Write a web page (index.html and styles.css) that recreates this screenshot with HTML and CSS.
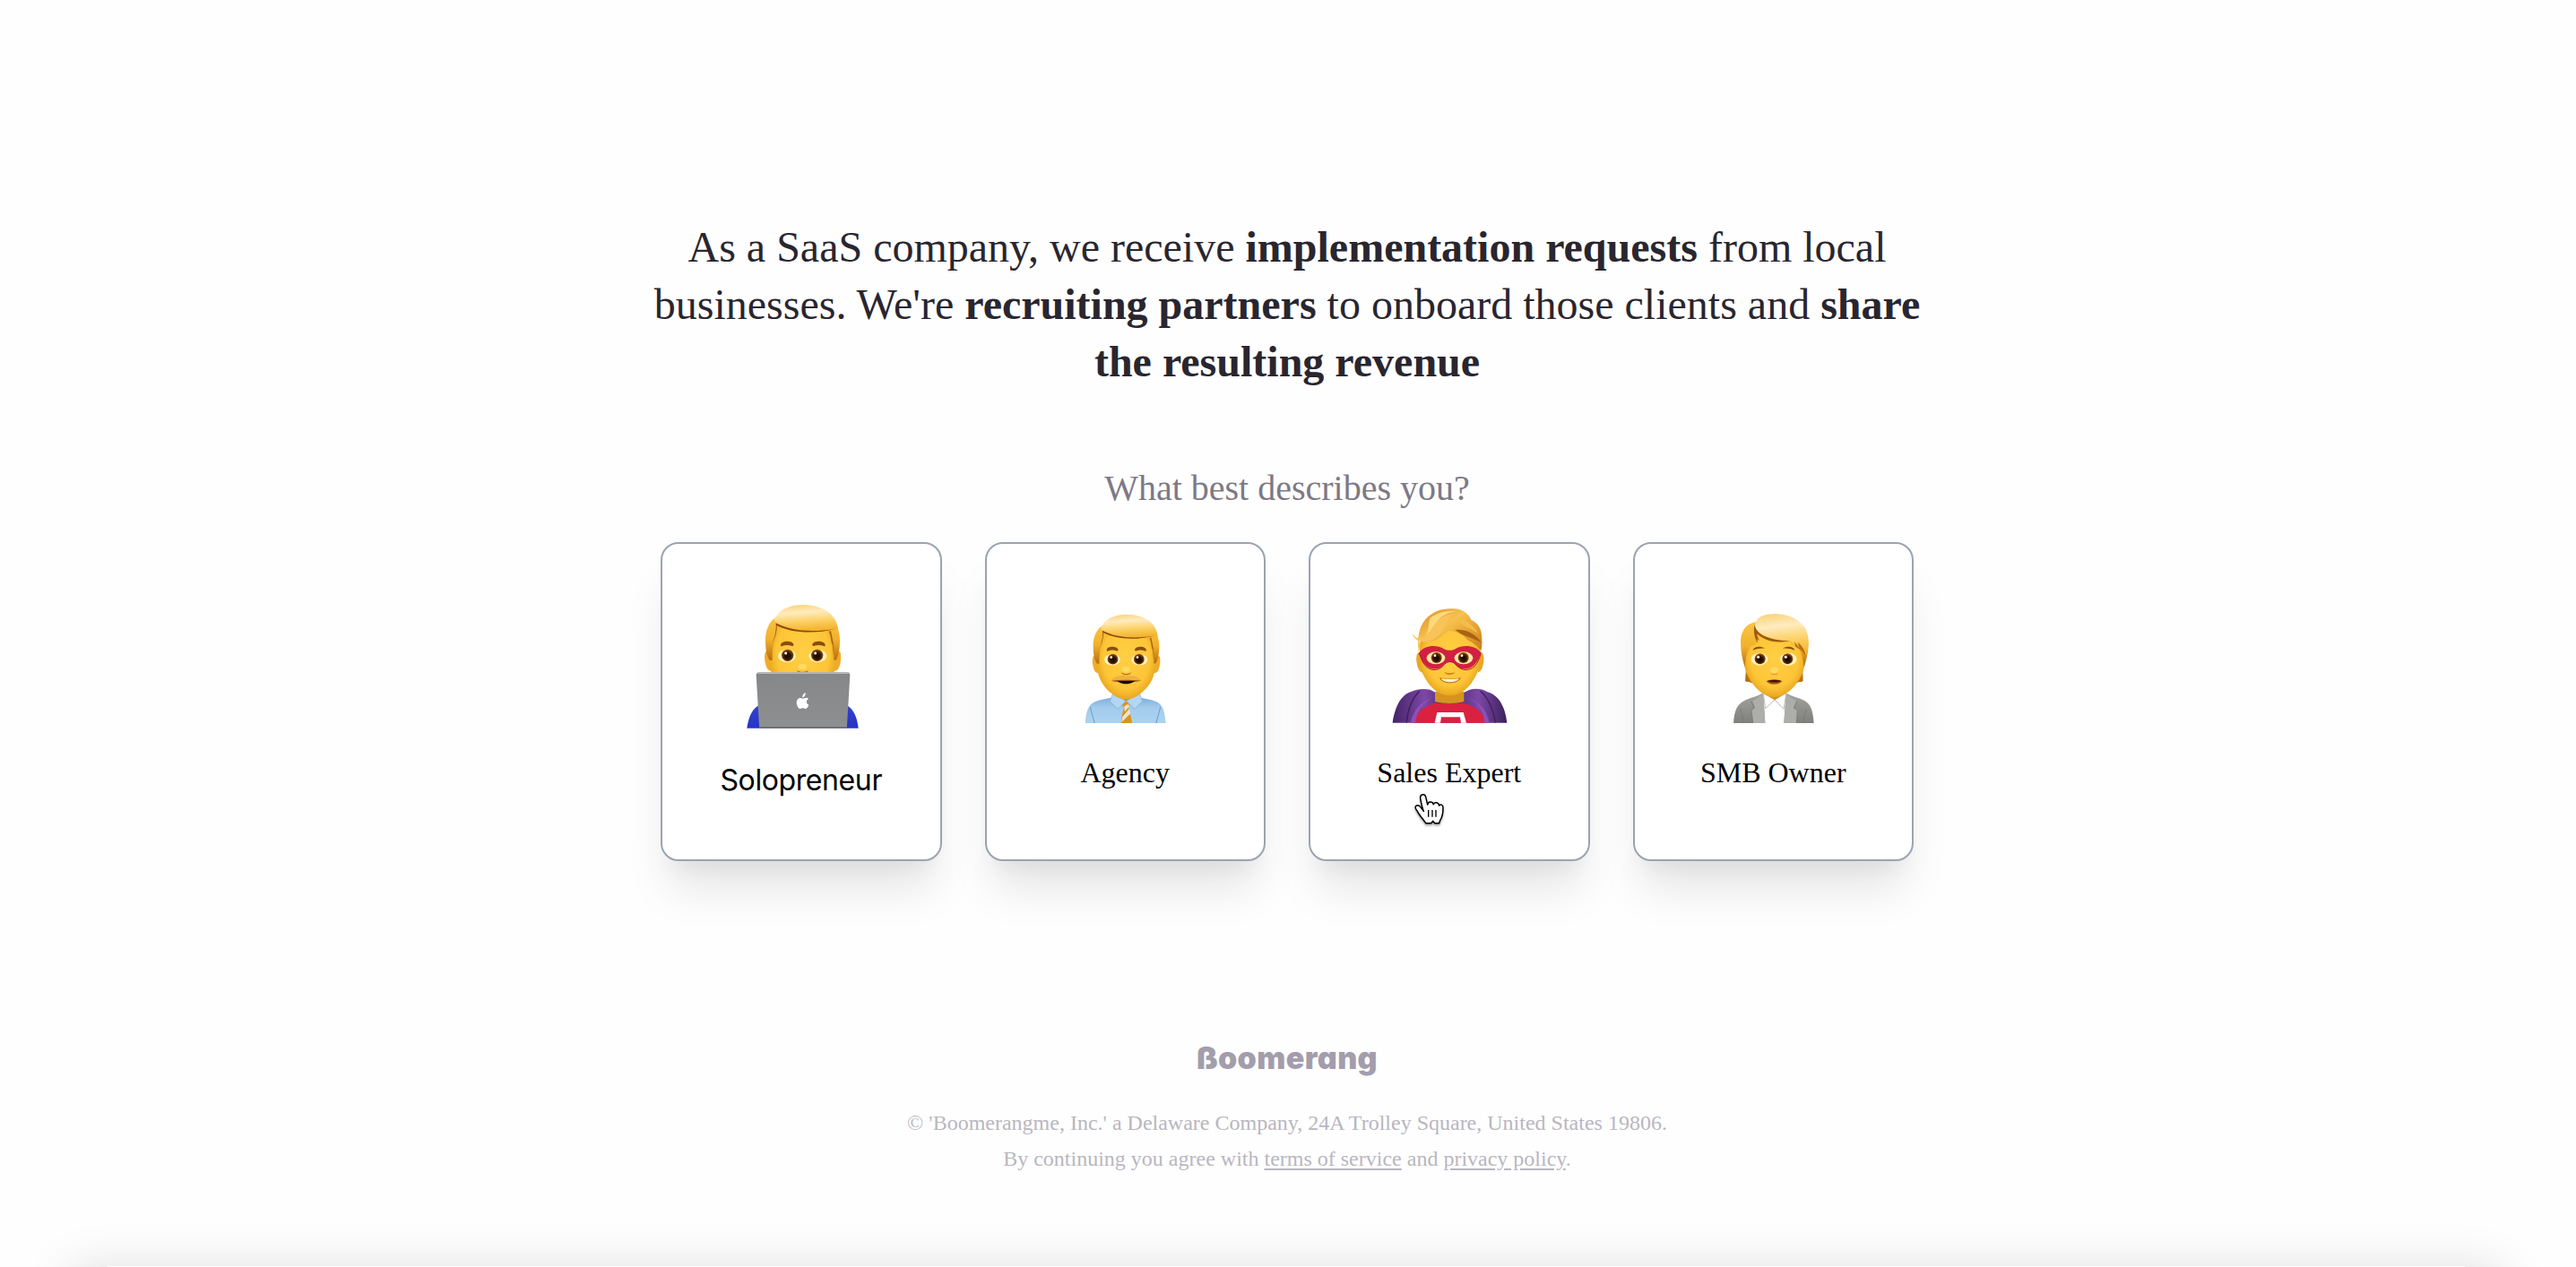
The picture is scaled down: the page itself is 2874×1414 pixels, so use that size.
FILE: index.html
```html
<!DOCTYPE html>
<html lang="en">
<head>
<meta charset="utf-8">
<title>Boomerang partners</title>
<link rel="stylesheet" href="styles.css">
</head>
<body>
<main class="page">
  <h1 class="intro">As a SaaS company, we receive <b>implementation requests</b> from local businesses. We're <b>recruiting partners</b> to onboard those clients and <b>share the resulting revenue</b></h1>
  <p class="question">What best describes you?</p>

  <div class="cards">
    <button class="card card-solo">
      <svg class="art" viewBox="342 240 480 480" aria-hidden="true">
        <defs>
          <radialGradient id="skin" cx=".5" cy=".48" r=".6">
            <stop offset="0" stop-color="#ffcf45"/><stop offset=".65" stop-color="#fdc537"/><stop offset="1" stop-color="#dc9512"/>
          </radialGradient>
          <linearGradient id="hair" x1="0" y1="0" x2="0" y2="1">
            <stop offset="0" stop-color="#fbc544"/><stop offset=".55" stop-color="#f2b02b"/><stop offset="1" stop-color="#b56c10"/>
          </linearGradient>
          <linearGradient id="fringe" x1=".42" y1="0" x2=".58" y2="1">
            <stop offset="0" stop-color="#fbd680"/><stop offset=".28" stop-color="#ffebbf"/><stop offset=".62" stop-color="#fcd166"/><stop offset="1" stop-color="#f2b029"/>
          </linearGradient>
          <radialGradient id="iris" cx=".5" cy=".55" r=".5">
            <stop offset="0" stop-color="#160800"/><stop offset=".55" stop-color="#2c1202"/><stop offset="1" stop-color="#8d4a0c"/>
          </radialGradient>
          <linearGradient id="lid" x1="0" y1="0" x2="0" y2="1">
            <stop offset="0" stop-color="#858789"/><stop offset="1" stop-color="#8d8f90"/>
          </linearGradient>
          <linearGradient id="sleeve" x1="0" y1="0" x2="0" y2="1">
            <stop offset="0" stop-color="#3443cf"/><stop offset="1" stop-color="#2733c4"/>
          </linearGradient>
          <g id="eyes">
            <ellipse cx="534" cy="456" rx="30" ry="21" fill="#fff3c2"/>
            <ellipse cx="637" cy="456" rx="30" ry="21" fill="#fff3c2"/>
            <circle cx="536" cy="454" r="20" fill="url(#iris)"/>
            <circle cx="635" cy="454" r="20" fill="url(#iris)"/>
            <circle cx="530" cy="447" r="4.5" fill="#fff"/>
            <circle cx="629" cy="447" r="4.5" fill="#fff"/>
          </g>
          <g id="head">
            <path d="M470 440c-12-2-13 20-8 42 4 18 11 26 24 24zM704 440c12-2 13 20 8 42-4 18-11 26-24 24z" fill="#f2ab27"/>
            <path d="M586 300c-70 0-109 40-111 110-2 60 2 98 14 121 16 36 58 75 97 75s81-39 98-75c12-23 17-61 15-121-2-70-43-110-113-110z" fill="url(#skin)"/>
            <path d="M496 328c-24 15-34 45-34 76 0 25 3 52 14 66l9 1c0-32 1-48 6-60 12-22 14-44 13-62zM668 318c30 16 42 50 43 84 0 24-2 48-12 67l-8 2c1-25 0-49-5-67-4-12-6-30-13-34z" fill="url(#hair)"/>
            <path d="M492 334c12-31 50-49 94-49 64 0 112 28 119 80-38 7-83 10-125 6-34-5-59-15-80-24-5-3-9-7-8-13z" fill="url(#fringe)"/>
            <path d="M497 346c48 25 112 33 198 20-66 17-149 14-195-12 1 25-8 46-15 59 10-22 14-45 12-67z" fill="#8f4b08"/>
            <path d="M675 374c8 20 5 33 12 46l3 42c4-36-4-63-9-89z" fill="#a8610f"/>
            <path d="M513 421c-1-18 39-18 43-4 1 5-2 7-7 5-12-4-22-2-31 1-3 1-5 1-5-2zM662 421c1-18-39-18-43-4-1 5 2 7 7 5 12-4 22-2 31 1 3 1 5 1 5-2z" fill="#8a4d10"/>
            <use href="#eyes"/>
            <ellipse cx="586" cy="492" rx="15" ry="10" fill="#ffdb62"/>
            <path d="M567 503c10 8 28 8 39 0-3 14-36 14-39 0z" fill="#b66f13"/>
          </g>
        </defs>
        <use href="#head"/>
        <path d="M400 698c5-38 20-72 48-79h278c28 7 43 41 47 79z" fill="url(#sleeve)"/>
        <path d="M440 511h297c6 0 8 4 8 10l-10 168c0 5-2 9-7 9H448c-5 0-7-4-7-9l-10-168c0-6 3-10 9-10z" fill="url(#lid)"/>
        <path d="M434 516c1-4 3-5 7-5h295c4 0 6 1 7 5z" fill="#b8b9ba"/>
        <path d="M442 693h292l-3 5H445z" fill="#6d6e70"/>
        <path d="M596 588c1 9-5 16-10 17-1-9 4-15 10-17zM587 608c4 0 7-3 12-3 3 0 6 2 7 4-9 5-8 16 1 20-3 8-7 13-11 13s-6-2-9-2-6 2-9 2c-7 0-12-14-12-21 0-9 6-15 12-15 4 0 6 2 9 2z" transform="translate(0 -9)" fill="#fff"/>
      </svg>
      <span class="label">Solopreneur</span>
    </button>

    <button class="card">
      <svg class="art" viewBox="287 240 480 480" aria-hidden="true">
        <defs>
          <linearGradient id="shirt" x1="0" y1="0" x2="0" y2="1">
            <stop offset="0" stop-color="#7eaedb"/><stop offset=".4" stop-color="#a3cbec"/><stop offset="1" stop-color="#abd3f1"/>
          </linearGradient>
        </defs>
        <path d="M394 681c4-40 10-61 32-71 20-9 42-10 62-15h84c20 5 42 6 62 15 20 10 26 31 30 71z" fill="url(#shirt)"/>
        <path d="M411 627c5 22 10 36 15 54M646 627c-5 22-10 36-15 54" fill="none" stroke="#6d9ac3" stroke-width="3"/>
        <path d="M490 582h82v14l-41 14-41-14z" fill="#c98917"/>
        <path d="M522 608h18l4 12-5 9c5 14 9 31 12 52h-37c2-21 5-38 10-52l-6-9z" fill="#d8941d"/>
        <path d="M525 625l13-8 5 7-17 19zM518 661l24-28 4 16-30 29z" fill="#eee1d3"/>
        <path d="M487 581l-10 27 26 26 28-27zM576 581l10 27-26 26-29-27z" fill="#b2d7f4" stroke="#7babd4" stroke-width="2"/>
        <g transform="translate(11 64.1) scale(.8873)"><use href="#head"/></g>
        <path d="M481 538c9-12 31-20 50-14 20-6 42 2 51 14-30 8-72 8-101 0z" fill="#eeb13b"/>
        <path d="M480 539c34-4 68-4 102 0-22 6-80 6-102 0z" fill="#9b5510"/>
        <path d="M502 540h58c-14 13-44 13-58 0z" fill="#180600"/>
      </svg>
      <span class="label">Agency</span>
    </button>

    <button class="card">
      <svg class="art" viewBox="290 240 480 480" aria-hidden="true">
        <defs>
          <linearGradient id="cape" x1="0" y1="0" x2="1" y2="0">
            <stop offset="0" stop-color="#442369"/><stop offset=".28" stop-color="#7d47a6"/><stop offset=".5" stop-color="#4b2771"/><stop offset=".75" stop-color="#7d47a6"/><stop offset="1" stop-color="#3b205b"/>
          </linearGradient>
          <linearGradient id="wave" x1="0" y1="0" x2="1" y2="1">
            <stop offset="0" stop-color="#d98923"/><stop offset=".4" stop-color="#f7c24d"/><stop offset="1" stop-color="#c97917"/>
          </linearGradient>
        </defs>
        <path d="M340 680c7-50 27-94 62-104 20-10 43-11 64-7l18 10h94l20-10c21-5 43-3 60 8 38 10 60 52 65 103z" fill="url(#cape)"/>
        <path d="M412 680c5-31 24-51 68-66h100c44 14 66 35 72 66z" fill="#da2140"/>
        <path d="M400 680c10-45 34-70 72-84-34 22-50 46-56 84zM664 680c-9-43-30-67-72-84 37 20 52 44 56 84z" fill="#8c50b8"/>
        <path d="M430 574c-23 23-39 55-43 106M634 574c26 23 42 55 50 106" fill="none" stroke="#3b205b" stroke-width="4"/>
        <path d="M489 645h88l10 35h-18l-3-19h-63l-3 19h-19z" fill="#fff"/>
        <path d="M482 575h97v34c-25 8-70 8-97 0z" fill="#d59420"/>
        <path d="M429 447c-13 0-8 54 9 62zM636 447c13 0 8 54-9 62z" fill="#e9a625" stroke="#e9a625" stroke-width="4"/>
        <path d="M530 330c-65 0-99 45-99 102 0 38 2 68 12 88 18 38 50 69 89 69 38 0 70-31 88-69 10-20 14-50 14-88 0-57-39-102-104-102z" fill="url(#skin)"/>
        <path d="M427 443c-5-48 0-82 24-111 24-25 54-36 94-34 27 1 48 14 58 37 28 12 36 36 36 63 1 13 0 30-3 40-14-18-29-27-46-36-16-22-43-30-62-30-20 11-31 29-56 36-15 4-31 3-43-6 3 14 2 29-2 41z" fill="url(#wave)"/>
        <path d="M408 377c0 12 12 22 27 19 22-4 29-27 43-45 14-19 41-35 66-35-17 17-29 32-33 48-13 27-37 43-61 44-27 1-46-13-42-31z" fill="#f8c358"/>
        <path d="M466 329c22-18 57-27 87-22-46 6-64 31-79 53-7 11-14 21-23 27 15-24 7-40 15-58z" fill="#fdd97c"/>
        <path d="M549 369c30-3 63 6 89 43-25-15-50-20-68-29z" fill="#aa6213"/>
        <path d="M568 334c17 3 45 20 60 50-15-16-43-25-62-36z" fill="#f5bc4c"/>
        <path d="M428 446c20-27 60-28 84-13 14 6 24 6 38 0 25-15 65-14 87 13-7 12-12 28-23 39-19 20-49 20-65-2-12-10-24-10-36 0-16 22-45 22-64 2-10-10-15-25-21-39z" fill="#d12042"/>
        <path d="M430 448c5 18 11 32 22 43 19 18 47 14 62-7 11-11 26-11 37 0 15 21 43 25 63 7 10-11 17-25 21-43" fill="none" stroke="#a91435" stroke-width="3"/>
        <ellipse cx="485" cy="463" rx="31" ry="21" fill="#fae7a3"/><ellipse cx="578" cy="463" rx="31" ry="21" fill="#fae7a3"/>
        <circle cx="487" cy="462" r="18" fill="url(#iris)"/><circle cx="577" cy="462" r="18" fill="url(#iris)"/>
        <circle cx="482" cy="455" r="4" fill="#fff"/><circle cx="572" cy="455" r="4" fill="#fff"/>
        <path d="M514 509c10 6 24 6 34 0-3 13-31 13-34 0z" fill="#c67d16"/>
        <path d="M497 529c22 5 49 5 72 0-8 23-63 25-72 0z" fill="#b76d14"/>
        <path d="M502 532c20 3 42 3 61 0-8 15-51 17-61 0z" fill="#f9f1cf"/>
      </svg>
      <span class="label">Sales Expert</span>
      <svg class="cursor" viewBox="411 912 105 114" aria-hidden="true">
        <path d="M445 976c-4-10-8-25-11-44-1-14 15-16 18-4l6 26c2-11 16-13 20-1 4-9 17-7 19 4 6-6 13-2 13 7 0 20-2 32-10 43l-3 9h-15l-6-7-6 7h-18c-6-10-22-27-28-40-11-13-7-20 2-20 7 1 14 12 19 20z" fill="#fff" stroke="#000" stroke-width="4.5" stroke-linejoin="round"/>
        <path d="M461 972v23M474 972v23M486 972v23" stroke="#000" stroke-width="4"/>
      </svg>
    </button>

    <button class="card">
      <svg class="art" viewBox="294 240 480 480" aria-hidden="true">
        <defs>
          <linearGradient id="suit" x1="0" y1="0" x2="0" y2="1">
            <stop offset="0" stop-color="#a3a39f"/><stop offset="1" stop-color="#7f7f7b"/>
          </linearGradient>
        </defs>
        <path d="M402 681c3-42 12-63 36-75 20-10 43-13 62-26h78c20 13 43 16 62 26 22 12 28 35 31 75z" fill="url(#suit)"/>
        <path d="M501 582h77l-7 99h-63z" fill="#fff"/>
        <path d="M502 581c-13 10-24 19-35 25l7 24-12 7 5 44h41zM578 581c12 10 23 19 34 25l-8 24 13 7-4 44h-42z" fill="#adada9"/>
        <path d="M460 607l12 23-10 7 5 44M616 607l-12 23 12 7-3 44M425 634c6 14 9 28 12 47M647 634c-6 14-9 28-12 47" fill="none" stroke="#777773" stroke-width="2.5"/>
        <path d="M502 585l7 47 31-29 30 31 8-48" fill="#fff" stroke="#b9b9b9" stroke-width="3"/>
        <path d="M503 583v-12h73v12l-36 21z" fill="#d3921c"/>
        <path d="M445 490l-4 49c6 7 12 2 15 5 7 5 14 2 20 2l-11-57zM633 490l2 49c-6 7-12 2-15 5-7 5-14 2-20 2l15-57z" fill="#b86f17"/>
        <path d="M539 340c-67 0-101 38-102 93 0 41 0 68 13 90 17 35 52 71 89 71s73-36 90-71c12-22 13-49 13-90-1-55-36-93-103-93z" fill="url(#skin)"/>
        <path d="M478 343c-38 4-52 36-52 68 0 29 6 57 14 83 3-32 5-50 18-68l12-8-3 8 14-14v-14l9 8c-2-21-8-38-10-55zM590 400c17 11 24 17 31 29 11 19 14 42 17 65 8-23 15-50 15-81-1-24-7-44-16-56z" fill="url(#hair)"/>
        <path d="M474 352c2-25 30-37 66-37 70 0 115 42 113 95-1 20-4 34-9 48-3-24-13-37-27-48l6 20-17-22 4 18-19-20c-40 7-90-8-110-29-6-6-8-12-7-25z" fill="url(#fringe)"/>
        <path d="M473 350c2 32 49 55 118 55-52 13-94-5-110-24 0 10 3 17 8 24l-8-5 2 14c-12-23-15-44-10-64z" fill="#a05a0c"/>
        <path d="M591 405l19 21-4-18 17 22-6-20c14 11 24 25 27 48-7-12-13-20-20-24-11-6-22-13-33-29z" fill="#b8700f"/>
        <path d="M467 437c4-14 27-14 40-6-15-1-27 1-40 6zM607 437c-4-14-27-14-40-6 15-1 27 1 40 6z" fill="#8c4e10"/>
        <ellipse cx="489" cy="467" rx="28" ry="21" fill="#fff3c2"/><ellipse cx="586" cy="467" rx="28" ry="21" fill="#fff3c2"/>
        <circle cx="491" cy="466" r="18" fill="url(#iris)"/><circle cx="583" cy="466" r="18" fill="url(#iris)"/>
        <circle cx="485" cy="460" r="4.5" fill="#fff"/><circle cx="577" cy="460" r="4.5" fill="#fff"/>
        <ellipse cx="538" cy="503" rx="13" ry="10" fill="#ffda60"/>
        <path d="M525 514c8 5 18 5 27 0-3 8-24 8-27 0z" fill="#ca8318"/>
        <path d="M512 541c17-8 36-8 53 0-12 13-42 13-53 0z" fill="#9c4c0c"/>
        <path d="M516 539c16-3 30-3 46 0-12 6-34 6-46 0z" fill="#3b1202"/>
      </svg>
      <span class="label">SMB Owner</span>
    </button>
  </div>

  <footer class="footer">
    <div class="brand">ßoomerang</div>
    <p class="legal">© 'Boomerangme, Inc.' a Delaware Company, 24A Trolley Square, United States 19806.<br>By continuing you agree with <a href="#">terms of service</a> and <a href="#">privacy policy</a>.</p>
  </footer>
</main>
<div class="next-panel"></div>
</body>
</html>
```

FILE: styles.css
```css
* {
  box-sizing: border-box;
}

html {
  overflow: hidden;
}

body {
  margin: 0;
  height: 1414px;
  overflow: hidden;
  display: flex;
  flex-direction: column;
  background: #fefefe;
  font-family: "Liberation Serif", "Times New Roman", serif;
}

.page {
  flex: 1;
  width: 2872px;
  padding-top: 244px;
  display: flex;
  flex-direction: column;
  align-items: center;
}

.intro {
  width: 1440px;
  margin: 0;
  font-size: 48px;
  font-weight: 400;
  line-height: 64px;
  text-align: center;
  color: #29262f;
}

.question {
  margin: 81px 0 32px;
  font-size: 40px;
  line-height: 56px;
  color: #7d7986;
}

.cards {
  width: 1398px;
  display: grid;
  grid-template-columns: repeat(4, 1fr);
  gap: 48px;
}

.card {
  position: relative;
  height: 356px;
  padding: 53px 0 0;
  display: flex;
  flex-direction: column;
  align-items: center;
  justify-content: flex-start;
  gap: 18px;
  border: 2px solid #9ca3af;
  border-radius: 20px;
  background: #fff;
  box-shadow: 0 40px 50px -10px rgba(0, 0, 0, 0.1), 0 20px 20px -10px rgba(0, 0, 0, 0.04);
  font: 32px/48px "Liberation Serif", "Times New Roman", serif;
  color: #000;
}

.card-solo {
  gap: 27px;
  font-family: Inter, sans-serif;
  letter-spacing: -0.4px;
}

.art {
  display: block;
  width: 160px;
  height: 160px;
}

.cursor {
  position: absolute;
  left: 115px;
  top: 277px;
  width: 35px;
  height: 38px;
  filter: drop-shadow(0 2px 1px rgba(0, 0, 0, 0.35));
}

.footer {
  margin-top: 196px;
  display: flex;
  flex-direction: column;
  align-items: center;
  gap: 28px;
  text-align: center;
}

.brand {
  font: 900 34px/48px Inter, sans-serif;
  font-feature-settings: "cv11";
  letter-spacing: 0.4px;
  color: #a39dac;
}

.legal {
  margin: 0;
  font-size: 24px;
  line-height: 40px;
  color: #b9b6c0;
}

.legal a {
  color: inherit;
  text-underline-offset: 3px;
}

.next-panel {
  height: 1px;
  margin: 0 124px 0 120px;
  border-radius: 20px;
  box-shadow: 0 45px 56px 40px rgba(0, 0, 0, 0.14);
}
```
